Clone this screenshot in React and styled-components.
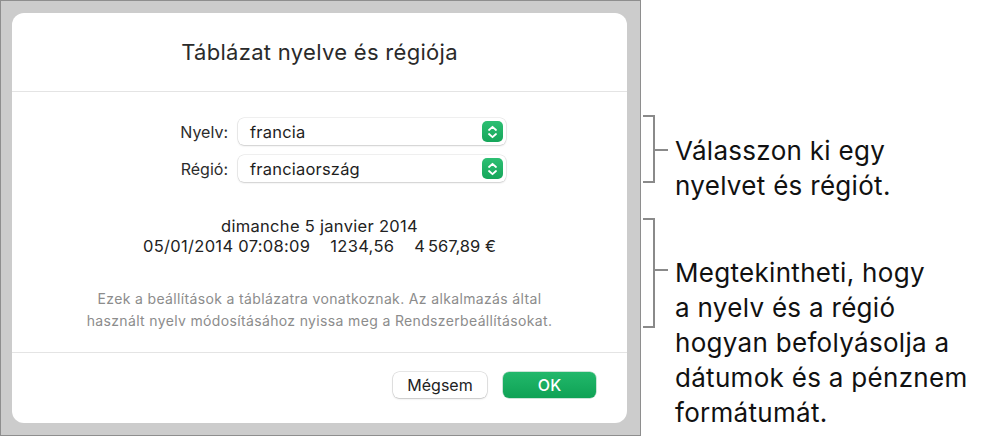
import React from "react";
import styled, { createGlobalStyle } from "styled-components";

const GlobalStyle = createGlobalStyle`
  html, body {
    margin: 0;
    padding: 0;
    background: #ffffff;
  }
  body {
    font-family: Inter, "Noto Sans", sans-serif;
    -webkit-font-smoothing: antialiased;
  }
`;

const Page = styled.div`
  display: flex;
  align-items: flex-start;
  width: 988px;
  height: 438px;
  overflow: hidden;
`;

const Frame = styled.div`
  box-sizing: border-box;
  width: 641px;
  height: 436px;
  padding: 12px 13px 12px 11px;
  background: #cccccc;
  border: 1px solid #8e8e8e;
  flex-shrink: 0;
`;

const Card = styled.div`
  display: flex;
  flex-direction: column;
  height: 100%;
  background: #ffffff;
  border-radius: 12px;
`;

const Header = styled.div`
  display: flex;
  align-items: center;
  justify-content: center;
  height: 78px;
  border-bottom: 1px solid #e4e4e4;
  font-size: 22px;
  letter-spacing: 0.3px;
  color: #2a2a2a;
`;

const Body = styled.div`
  display: flex;
  flex-direction: column;
  padding: 26px 0 20px;
  border-bottom: 1px solid #e4e4e4;
`;

const FieldGrid = styled.div`
  display: grid;
  grid-template-columns: 216px 268px;
  column-gap: 10px;
  row-gap: 10px;
  align-items: center;
`;

const Label = styled.div`
  justify-self: end;
  font-size: 16px;
  color: #2c2c2c;
`;

const Select = styled.div`
  box-sizing: border-box;
  display: flex;
  align-items: center;
  justify-content: space-between;
  height: 27px;
  padding: 0 3px 0 12px;
  background: #ffffff;
  border-radius: 6px;
  box-shadow: 0 0 0 0.5px rgba(0, 0, 0, 0.12), 0 1px 2px rgba(0, 0, 0, 0.14);
  font-size: 16.5px;
  letter-spacing: 0.2px;
  color: #1e1e1e;
`;

const Stepper = styled.div`
  display: flex;
  align-items: center;
  justify-content: center;
  width: 21px;
  height: 21px;
  border-radius: 5px;
  background: linear-gradient(#2dbf73, #16a65a);
`;

const Preview = styled.div`
  display: flex;
  flex-direction: column;
  align-items: center;
  margin-top: 34px;
  font-size: 16.5px;
  letter-spacing: 0.3px;
  line-height: 20px;
  color: #222222;
`;

const NumberRow = styled.div`
  display: flex;
  gap: 20px;
`;

const Note = styled.p`
  margin: 32px 0 0;
  text-align: center;
  font-size: 14px;
  letter-spacing: 0.35px;
  line-height: 22px;
  color: #8c8c8c;
`;

const Footer = styled.div`
  display: flex;
  justify-content: flex-end;
  gap: 16px;
  padding: 19px 31px 0 0;
`;

const Button = styled.button`
  box-sizing: border-box;
  width: ${(p) => (p.$primary ? "93px" : "94px")};
  height: 26px;
  border-radius: 6px;
  border: none;
  font-family: inherit;
  font-size: 16px;
  font-weight: ${(p) => (p.$primary ? 500 : 400)};
  color: ${(p) => (p.$primary ? "#ffffff" : "#222222")};
  background: ${(p) =>
    p.$primary ? "linear-gradient(#22b86b, #0fa255)" : "#ffffff"};
  box-shadow: ${(p) =>
    p.$primary
      ? "0 0 0 0.5px rgba(0, 120, 60, 0.4)"
      : "0 0 0 0.5px rgba(0, 0, 0, 0.18), 0 1px 2px rgba(0, 0, 0, 0.15)"};
`;

const Notes = styled.div`
  display: flex;
  flex-direction: column;
  padding: 115px 0 0 2px;
`;

const Callout = styled.div`
  display: flex;
  align-items: flex-start;
  margin-top: ${(p) => p.$gap || 0}px;
`;

const CalloutText = styled.div`
  margin: ${(p) => p.$offset}px 0 0 7px;
  font-size: 26px;
  letter-spacing: 0.3px;
  line-height: 35px;
  color: #111111;
  white-space: nowrap;
`;

const Chevrons = () => (
  <svg width="11" height="14" viewBox="0 0 11 14" fill="none">
    <path
      d="M2 5 L5.5 1.8 L9 5 M2 9 L5.5 12.2 L9 9"
      stroke="#ffffff"
      strokeWidth="1.8"
      strokeLinecap="round"
      strokeLinejoin="round"
    />
  </svg>
);

const Bracket = ({ height, tick }) => (
  <svg width="25" height={height} viewBox={`0 0 25 ${height}`} fill="none">
    <path
      d={`M0 1 H11 V${height - 1} H0 M11 ${tick} H25`}
      stroke="#8a8a8a"
      strokeWidth="2"
    />
  </svg>
);

const Dropdown = ({ value }) => (
  <Select>
    <span>{value}</span>
    <Stepper>
      <Chevrons />
    </Stepper>
  </Select>
);

const App = () => {
  return (
    <>
      <GlobalStyle />
      <Page>
        <Frame>
          <Card>
            <Header>Táblázat nyelve és régiója</Header>
            <Body>
              <FieldGrid>
                <Label>Nyelv:</Label>
                <Dropdown value="francia" />
                <Label>Régió:</Label>
                <Dropdown value="franciaország" />
              </FieldGrid>
              <Preview>
                <div>dimanche 5 janvier 2014</div>
                <NumberRow>
                  <span>05/01/2014 07:08:09</span>
                  <span>1234,56</span>
                  <span>4{"\u202F"}567,89 €</span>
                </NumberRow>
              </Preview>
              <Note>
                Ezek a beállítások a táblázatra vonatkoznak. Az alkalmazás által
                <br />
                használt nyelv módosításához nyissa meg a Rendszerbeállításokat.
              </Note>
            </Body>
            <Footer>
              <Button>Mégsem</Button>
              <Button $primary>OK</Button>
            </Footer>
          </Card>
        </Frame>
        <Notes>
          <Callout>
            <Bracket height={68} tick={35} />
            <CalloutText $offset={17.5}>
              Válasszon ki egy
              <br />
              nyelvet és régiót.
            </CalloutText>
          </Callout>
          <Callout $gap={15.5}>
            <Bracket height={110} tick={52} />
            <CalloutText $offset={36.5}>
              Megtekintheti, hogy
              <br />a nyelv és a régió
              <br />
              hogyan befolyásolja a
              <br />
              dátumok és a pénznem
              <br />
              formátumát.
            </CalloutText>
          </Callout>
        </Notes>
      </Page>
    </>
  );
};

export default App;
